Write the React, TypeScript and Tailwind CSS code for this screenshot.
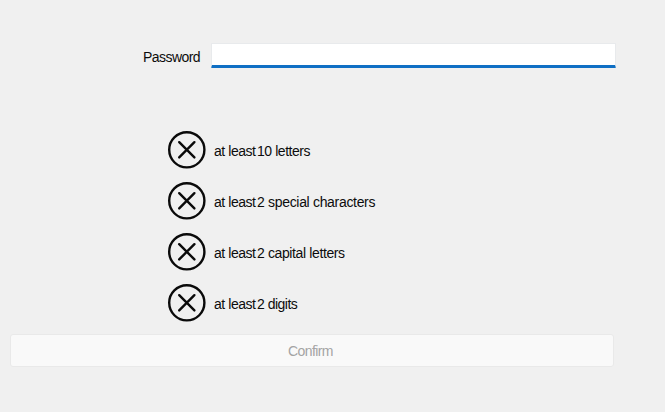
const rules = [
  { count: '10', text: 'letters', spacing: 'tracking-[-0.45px]' },
  { count: '2', text: 'special characters', spacing: 'tracking-[-0.32px]' },
  { count: '2', text: 'capital letters', spacing: 'tracking-[-0.38px]' },
  { count: '2', text: 'digits', spacing: 'tracking-[-0.5px]' },
];

function CrossCircle() {
  return (
    <svg className="h-[38px] w-[38px] shrink-0" viewBox="0 0 38 38" fill="none" stroke="#0a0a0a" strokeWidth="2.4">
      <circle cx="18.8" cy="18.8" r="17.6" />
      <path d="M11.2 11.2 26.4 26.4M26.4 11.2 11.2 26.4" strokeLinecap="round" />
    </svg>
  );
}

export default function App() {
  return (
    <main className="flex h-[412px] w-[665px] flex-col bg-[#f0f0f0] pt-[43px] font-['Liberation_Sans',sans-serif] text-sm text-[#0c0c0c]">
      <label className="flex h-[26px] items-start pl-[143px]">
        <span className="w-[68px] pt-1 tracking-[-0.55px]">Password</span>
        <input type="password" className="h-[25px] w-[405px] rounded-[1px] border border-b-[3px] border-[#e8eaec] border-b-[#0f6fc4] bg-white px-2 outline-none" />
      </label>
      <ul className="mt-[62px] flex flex-col gap-[13px] pl-[168px]">
        {rules.map((r) => (
          <li key={r.text} className="flex h-[38px] items-center">
            <CrossCircle />
            <span className="ml-2 flex whitespace-nowrap pt-[2px]">
              <span className="w-[43px] tracking-[-0.45px]">at least</span>
              <span className={r.spacing}>{r.count} {r.text}</span>
            </span>
          </li>
        ))}
      </ul>
      <button disabled className="mt-3 ml-[10px] h-[33px] w-[604px] rounded-[3px] border border-[#e9e9e9] bg-[#f9f9f9] pt-px pr-[3px] tracking-[-0.6px] text-[#a4a4a4]">
        Confirm
      </button>
    </main>
  );
}
